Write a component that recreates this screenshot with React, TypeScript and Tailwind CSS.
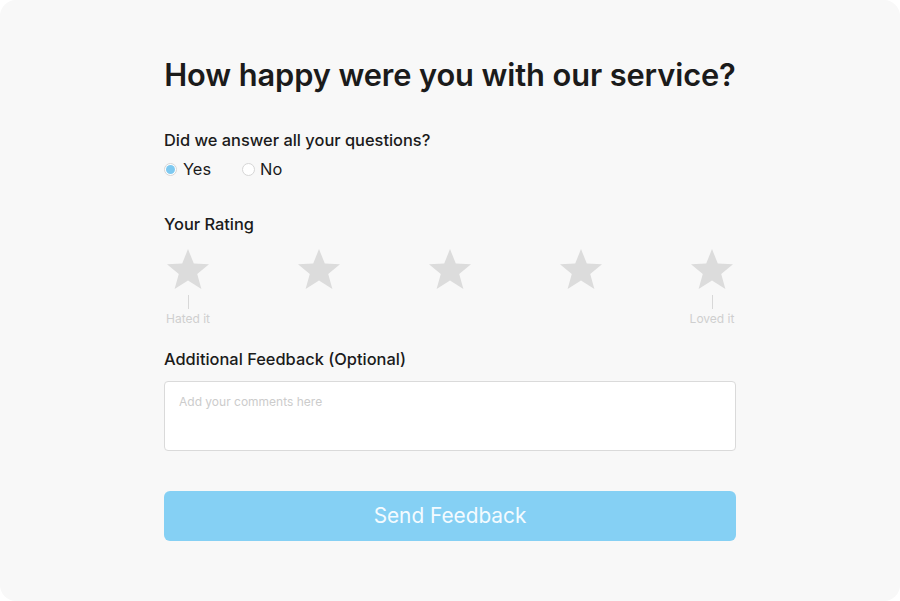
import React from "react";

const Star = () => (
  <svg width="48" height="48" viewBox="0 0 24 24" className="block">
    <path
      d="M12 1.5l2.9 7.3 7.6.3-5.9 4.9 2.1 7.5L12 17.3l-6.7 4.2 2.1-7.5-5.9-4.9 7.6-.3z"
      fill="#dcdcdc"
    />
  </svg>
);

export default function App() {
  return (
    <div className="w-[900px] h-[601px] bg-white" style={{ fontFamily: "Inter, 'Noto Sans', sans-serif" }}>
      <div className="w-full h-full bg-[#f8f8f8] rounded-[16px] flex justify-center">
        <div className="w-[572px] flex flex-col pt-[56px]">
          <h1 className="text-[30.8px] leading-[38px] font-semibold text-[#1b1b1b] text-center tracking-[-0.1px] whitespace-nowrap">
            How happy were you with our service?
          </h1>
          <div className="mt-[35px] text-[16.4px] leading-[22px] font-medium text-[#1b1b1b]">
            Did we answer all your questions?
          </div>
          <div className="mt-[7px] flex items-center text-[16.4px] leading-[22px] text-[#1b1b1b]">
            <div className="flex items-center">
              <span className="w-[13px] h-[13px] rounded-full border border-[#d6d6d6] bg-white flex items-center justify-center">
                <span className="w-[9px] h-[9px] rounded-full bg-[#7ec9f0]" />
              </span>
              <span className="ml-[6px]">Yes</span>
            </div>
            <div className="flex items-center ml-[31px]">
              <span className="w-[13px] h-[13px] rounded-full border border-[#d6d6d6] bg-white" />
              <span className="ml-[5px]">No</span>
            </div>
          </div>
          <div className="mt-[33px] text-[16.4px] leading-[22px] font-medium text-[#1b1b1b]">Your Rating</div>
          <div className="mt-[11px] flex justify-between">
            {[0, 1, 2, 3, 4].map((i) => (
              <div key={i} className="flex flex-col items-center w-[48px]">
                <Star />
                {i === 0 || i === 4 ? (
                  <>
                    <div className="w-px h-[14px] bg-[#d8d8d8] mt-[1px]" />
                    <div className="mt-[2px] text-[12px] leading-[16px] text-[#cfcfcf] whitespace-nowrap">
                      {i === 0 ? "Hated it" : "Loved it"}
                    </div>
                  </>
                ) : null}
              </div>
            ))}
          </div>
          <div className="mt-[21px] text-[16.4px] leading-[22px] font-medium text-[#1b1b1b]">
            Additional Feedback (Optional)
          </div>
          <div className="mt-[11px] h-[70px] bg-white border border-[#dadada] rounded-[4px] px-[14px] pt-[12px] text-[12px] leading-[16px] text-[#cccccc]">
            Add your comments here
          </div>
          <button className="mt-[40px] h-[50px] w-full rounded-[6px] bg-[#85d0f4] text-[#f4fbff] text-[20.8px] font-normal">
            Send Feedback
          </button>
        </div>
      </div>
    </div>
  );
}
